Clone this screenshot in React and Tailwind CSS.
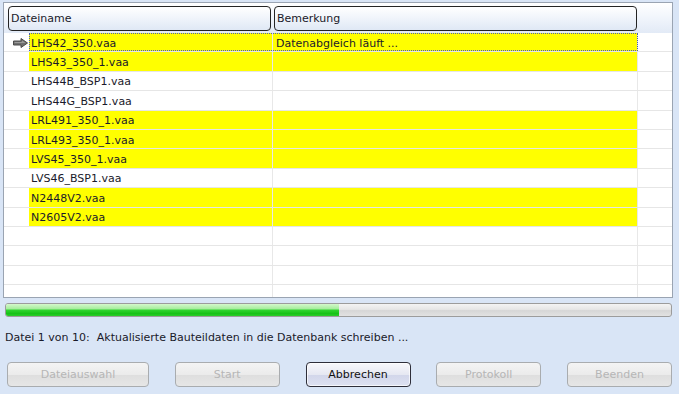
import React from "react";

const rows = [
  { name: "LHS42_350.vaa", note: "Datenabgleich läuft ...", y: true, cur: true },
  { name: "LHS43_350_1.vaa", y: true },
  { name: "LHS44B_BSP1.vaa" },
  { name: "LHS44G_BSP1.vaa" },
  { name: "LRL491_350_1.vaa", y: true },
  { name: "LRL493_350_1.vaa", y: true },
  { name: "LVS45_350_1.vaa", y: true },
  { name: "LVS46_BSP1.vaa" },
  { name: "N2448V2.vaa", y: true },
  { name: "N2605V2.vaa", y: true },
  { name: "" },
  { name: "" },
  { name: "" },
  { name: "" },
];

function Arrow() {
  return (
    <svg width="15" height="10" viewBox="0 0 15 10">
      <path
        d="M0.5 3 H8 V0.5 L14.5 5 L8 9.5 V7 H0.5 Z"
        fill="#6e6e6e"
        stroke="#4a4a4a"
        strokeWidth="1"
        strokeLinejoin="round"
      />
      <path d="M1.5 4 H9 V2.4 L12.5 5 H1.5 Z" fill="#9a9a9a" />
    </svg>
  );
}

function DisabledButton({ label, w }) {
  return (
    <div
      className={`${w} h-[25px] rounded-[4px] border border-[#a9acaf] bg-[linear-gradient(to_bottom,#f4f4f4_0%,#ebebeb_50%,#dedede_52%,#e6e6e6_100%)] flex items-center justify-center text-[#b6b6b6]`}
    >
      {label}
    </div>
  );
}

export default function App() {
  return (
    <div
      className="w-[679px] h-[394px] overflow-hidden bg-[#d9e5f6] text-[11px] text-[#1a1a2a] leading-none pt-[2px]"
      style={{ fontFamily: "'DejaVu Sans', Verdana, sans-serif" }}
    >
      {/* grid */}
      <div className="ml-[3px] w-[670px] h-[296px] border border-[#9aa4b2] bg-white flex flex-col overflow-hidden">
        {/* header */}
        <div className="h-[30px] shrink-0 bg-[linear-gradient(to_bottom,#ffffff_0%,#f2f6fc_45%,#e2eaf6_100%)] flex items-center pl-[4px]">
          <div className="w-[263px] h-[25px] rounded-[4px] border-[1.5px] border-[#242424] bg-[linear-gradient(to_bottom,#ffffff_0%,#f1f5fb_45%,#dfe8f5_100%)] flex items-center pl-[2px] pt-[1px]">
            Dateiname
          </div>
          <div className="ml-[3px] w-[363px] h-[25px] rounded-[4px] border-[1.5px] border-[#242424] bg-[linear-gradient(to_bottom,#ffffff_0%,#f1f5fb_45%,#dfe8f5_100%)] flex items-center pl-[2px] pt-[1px]">
            Bemerkung
          </div>
        </div>
        {/* rows */}
        {rows.map((r, i) => (
          <div key={i} className="h-[19.4px] shrink-0 flex border-b border-[#e6e6e6]">
            <div className="w-[25px] shrink-0 flex items-center justify-end pr-[1px] pt-[1px]">
              {r.cur ? <Arrow /> : null}
            </div>
            <div
              className={`flex ${r.cur ? "outline outline-1 outline-dotted outline-[#4a5fb0] -outline-offset-1" : ""}`}
            >
              <div
                className={`w-[244px] flex items-center pl-[2px] pt-[2px] border-r border-[#e8e8e8] ${r.y ? "bg-[#ffff00]" : ""}`}
              >
                {r.name}
              </div>
              <div
                className={`w-[365px] flex items-center pl-[3px] pt-[2px] border-r border-[#e8e8e8] ${r.y ? "bg-[#ffff00]" : ""}`}
              >
                {r.note || ""}
              </div>
            </div>
            <div className="flex-1" />
          </div>
        ))}
      </div>

      {/* progress bar */}
      <div className="ml-[5px] mt-[5px] w-[667px] h-[14px] rounded-[3px] border border-[#9c9c9c] overflow-hidden flex bg-[linear-gradient(to_bottom,#f4f4f4_0%,#e6e6e6_45%,#d6d6d6_55%,#e2e2e2_100%)]">
        <div className="w-[333px] h-full bg-[linear-gradient(to_bottom,#d4f8cc_0%,#a6ee9c_40%,#2fd42f_52%,#16c216_80%,#2ccd2c_100%)]" />
      </div>

      {/* status */}
      <div className="ml-[5px] mt-[13px] h-[14px] flex items-center whitespace-pre">
        Datei 1 von 10:  Aktualisierte Bauteildaten in die Datenbank schreiben ...
      </div>

      {/* buttons */}
      <div className="mt-[18px] px-[7px] flex justify-between">
        <DisabledButton label="Dateiauswahl" w="w-[142px]" />
        <DisabledButton label="Start" w="w-[105px]" />
        <div className="w-[105px] h-[25px] rounded-[4px] border border-[#2e2e3a] bg-[linear-gradient(to_bottom,#f8f8fc_0%,#e6e8f2_50%,#d2d6ea_52%,#dde1f1_100%)] shadow-[inset_0_0_0_1px_rgba(255,255,255,0.7)] flex items-center justify-center text-[#111]">
          Abbrechen
        </div>
        <DisabledButton label="Protokoll" w="w-[105px]" />
        <DisabledButton label="Beenden" w="w-[105px]" />
      </div>
    </div>
  );
}
